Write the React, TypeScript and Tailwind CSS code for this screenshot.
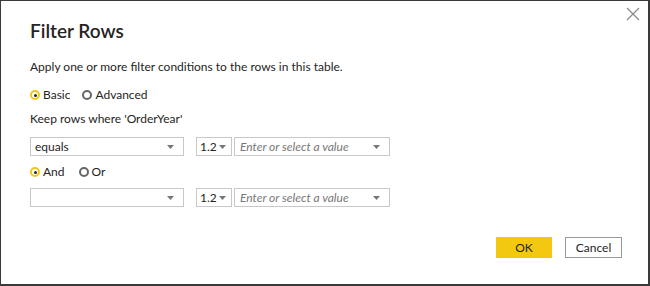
import React from 'react'

function Radio({ checked, label }: { checked?: boolean; label: string }) {
  return (
    <label className="flex items-center gap-[3px]">
      {checked ? (
        <span className="flex h-[10px] w-[10px] items-center justify-center rounded-full border-[2px] border-[#f2c811]">
          <span className="h-[3px] w-[3px] rounded-full bg-[#252423]" />
        </span>
      ) : (
        <span className="h-[10px] w-[10px] rounded-full border-[2px] border-[#666]" />
      )}
      <span>{label}</span>
    </label>
  )
}

function Caret() {
  return (
    <svg width="7" height="4" viewBox="0 0 7 4" className="shrink-0">
      <path d="M0 0h7L3.5 4z" fill="#777" />
    </svg>
  )
}

function Select({ value, className }: { value?: string; className: string }) {
  return (
    <div className={`flex h-[19px] items-center justify-between border border-[#c8c8c8] pl-[4px] pr-[9px] ${className}`}>
      <span>{value}</span>
      <Caret />
    </div>
  )
}

function ConditionRow({ op }: { op?: string }) {
  return (
    <div className="flex items-center">
      <Select value={op} className="w-[154px]" />
      <div className="ml-[12px] flex h-[19px] w-[36px] items-center justify-between border border-[#c8c8c8] pl-[3px] pr-[5px]">
        <span>1.2</span>
        <Caret />
      </div>
      <div className="ml-[2px] flex h-[19px] w-[156px] items-center justify-between border border-[#c8c8c8] pl-[5px] pr-[9px]">
        <span className="italic text-[#777]">Enter or select a value</span>
        <Caret />
      </div>
    </div>
  )
}

export default function App() {
  return (
    <div
      className="relative flex h-[286px] w-[650px] flex-col border-t border-l border-r-2 border-b-2 border-[#3a3a3a] bg-white pl-[29px] text-[12px] text-[#252423]"
      style={{ fontFamily: 'Lato, "Noto Sans", sans-serif' }}
    >
      <button className="absolute right-[8px] top-[6px] text-[#888]" aria-label="Close">
        <svg width="14" height="14" viewBox="0 0 14 14">
          <path d="M1 1l12 12M13 1L1 13" stroke="#888" strokeWidth="1.2" />
        </svg>
      </button>

      <h1 className="mt-[17px] text-[19px] font-semibold leading-[26px]">Filter Rows</h1>

      <p className="mt-[14px] text-[12px] leading-[18px]">
        Apply one or more filter conditions to the rows in this table.
      </p>

      <div className="mt-[11px] flex items-center gap-[12px] leading-[16px]">
        <Radio checked label="Basic" />
        <Radio label="Advanced" />
      </div>

      <p className="mt-[8px] leading-[16px]">Keep rows where 'OrderYear'</p>

      <div className="mt-[10px]">
        <ConditionRow op="equals" />
      </div>

      <div className="mt-[8px] flex items-center gap-[14px] leading-[16px]">
        <Radio checked label="And" />
        <Radio label="Or" />
      </div>

      <div className="mt-[8px]">
        <ConditionRow />
      </div>

      <div className="mt-[30px] flex justify-end gap-[13px] pr-[26px]">
        <button className="h-[21px] w-[56px] bg-[#f2c811] text-[12px]">OK</button>
        <button className="h-[21px] w-[57px] border border-[#999] bg-white text-[12px]">Cancel</button>
      </div>
    </div>
  )
}
